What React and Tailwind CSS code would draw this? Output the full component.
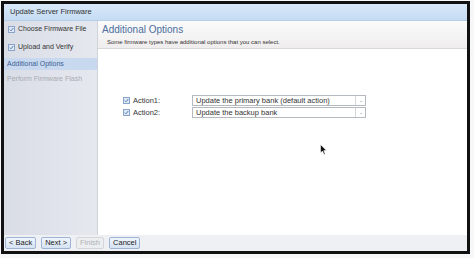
import React from "react";

function Check({ className = "" }) {
  return (
    <span className={"inline-flex items-center justify-center w-[7px] h-[7px] border border-[#8aa3c8] bg-[#dfe9f6] " + className}>
      <svg width="5" height="5" viewBox="0 0 5 5">
        <path d="M0.8 2.6 L2 3.8 L4.3 1" stroke="#4a70a8" strokeWidth="0.9" fill="none" />
      </svg>
    </span>
  );
}

function Select({ text }) {
  return (
    <div className="w-[174px] h-[11px] border border-[#b5b9c0] bg-white flex items-center">
      <span className="flex-1 pl-[3px] text-[7.5px] leading-none text-[#333]">{text}</span>
      <span className="w-[10px] h-full border-l border-[#d4d6da] flex items-center justify-center text-[5px] text-[#888]">⌄</span>
    </div>
  );
}

function Btn({ children, disabled }) {
  return (
    <div
      className={
        "h-[12px] px-[3px] flex items-center border rounded-[2px] text-[7.5px] leading-none " +
        (disabled
          ? "border-[#d4d6da] bg-[#eceef0] text-[#b0b3b8]"
          : "border-[#9fb4d4] bg-gradient-to-b from-[#f0f5fc] to-[#d6e3f4] text-[#222]")
      }
    >
      {children}
    </div>
  );
}

export default function App() {
  return (
    <div className="w-[474px] h-[258px] bg-[#f6f7f8] pt-[1px] pl-[1px]" style={{ fontFamily: "'Liberation Sans', Arial, sans-serif" }}>
      <div className="w-[469px] h-[253px] border-[3px] border-[#111] bg-white flex flex-col">
        <div className="h-[17px] shrink-0 bg-gradient-to-b from-[#d9e8f8] to-[#c4dcf4] flex items-center pl-[6px] text-[7.5px] text-[#333] border-b border-[#b8cde6]">
          Update Server Firmware
        </div>
        <div className="flex flex-1 min-h-0">
          <div className="w-[94px] shrink-0 flex flex-col bg-gradient-to-r from-[#d9dde6] to-[#e6e8ef] border-r border-[#cfd3da]">
            <div className="h-[17px] flex items-center gap-[3px] pl-[4px] text-[7px] text-[#333]">
              <Check />Choose Firmware File
            </div>
            <div className="h-[18px] flex items-center gap-[3px] pl-[4px] text-[7px] text-[#333]">
              <Check />Upload and Verify
            </div>
            <div className="h-[12px] mt-[2px] flex items-center pl-[3px] text-[7px] text-[#3a5f96] bg-[#c8d8ee]">
              Additional Options
            </div>
            <div className="h-[18px] flex items-center pl-[3px] text-[7px] text-[#a8abb2]">
              Perform Firmware Flash
            </div>
          </div>
          <div className="flex-1 flex flex-col">
            <div className="h-[28px] shrink-0 bg-gradient-to-b from-[#fbfbfb] to-[#efeded] border-b border-[#d8d8d8] pl-[4px] flex flex-col">
              <div className="text-[10px] leading-none text-[#4b6e9e] mt-[4px]">Additional Options</div>
              <div className="text-[6px] leading-none text-[#333] mt-[4px] pl-[5px]">Some firmware types have additional options that you can select.</div>
            </div>
            <div className="pl-[25px] pt-[46px] flex flex-col gap-[1px]">
              <div className="flex items-center">
                <Check />
                <span className="ml-[3px] w-[59px] text-[7.5px] text-[#333]">Action1:</span>
                <Select text="Update the primary bank (default action)" />
              </div>
              <div className="flex items-center">
                <Check />
                <span className="ml-[3px] w-[59px] text-[7.5px] text-[#333]">Action2:</span>
                <Select text="Update the backup bank" />
              </div>
            </div>
            <div className="relative flex-1">
              <svg className="absolute left-[222px] top-[25px]" width="7" height="11" viewBox="0 0 7 11">
                <path d="M0.5 0.5 L0.5 9 L2.5 7 L4 10.5 L5.2 10 L3.8 6.6 L6.5 6.6 Z" fill="#111" stroke="#fff" strokeWidth="0.6" />
              </svg>
            </div>
          </div>
        </div>
        <div className="h-[16px] shrink-0 flex items-center gap-[5px] pl-[1px] bg-[#eef0f4]">
          <Btn>&lt; Back</Btn>
          <Btn>Next &gt;</Btn>
          <Btn disabled>Finish</Btn>
          <Btn>Cancel</Btn>
        </div>
      </div>
    </div>
  );
}
